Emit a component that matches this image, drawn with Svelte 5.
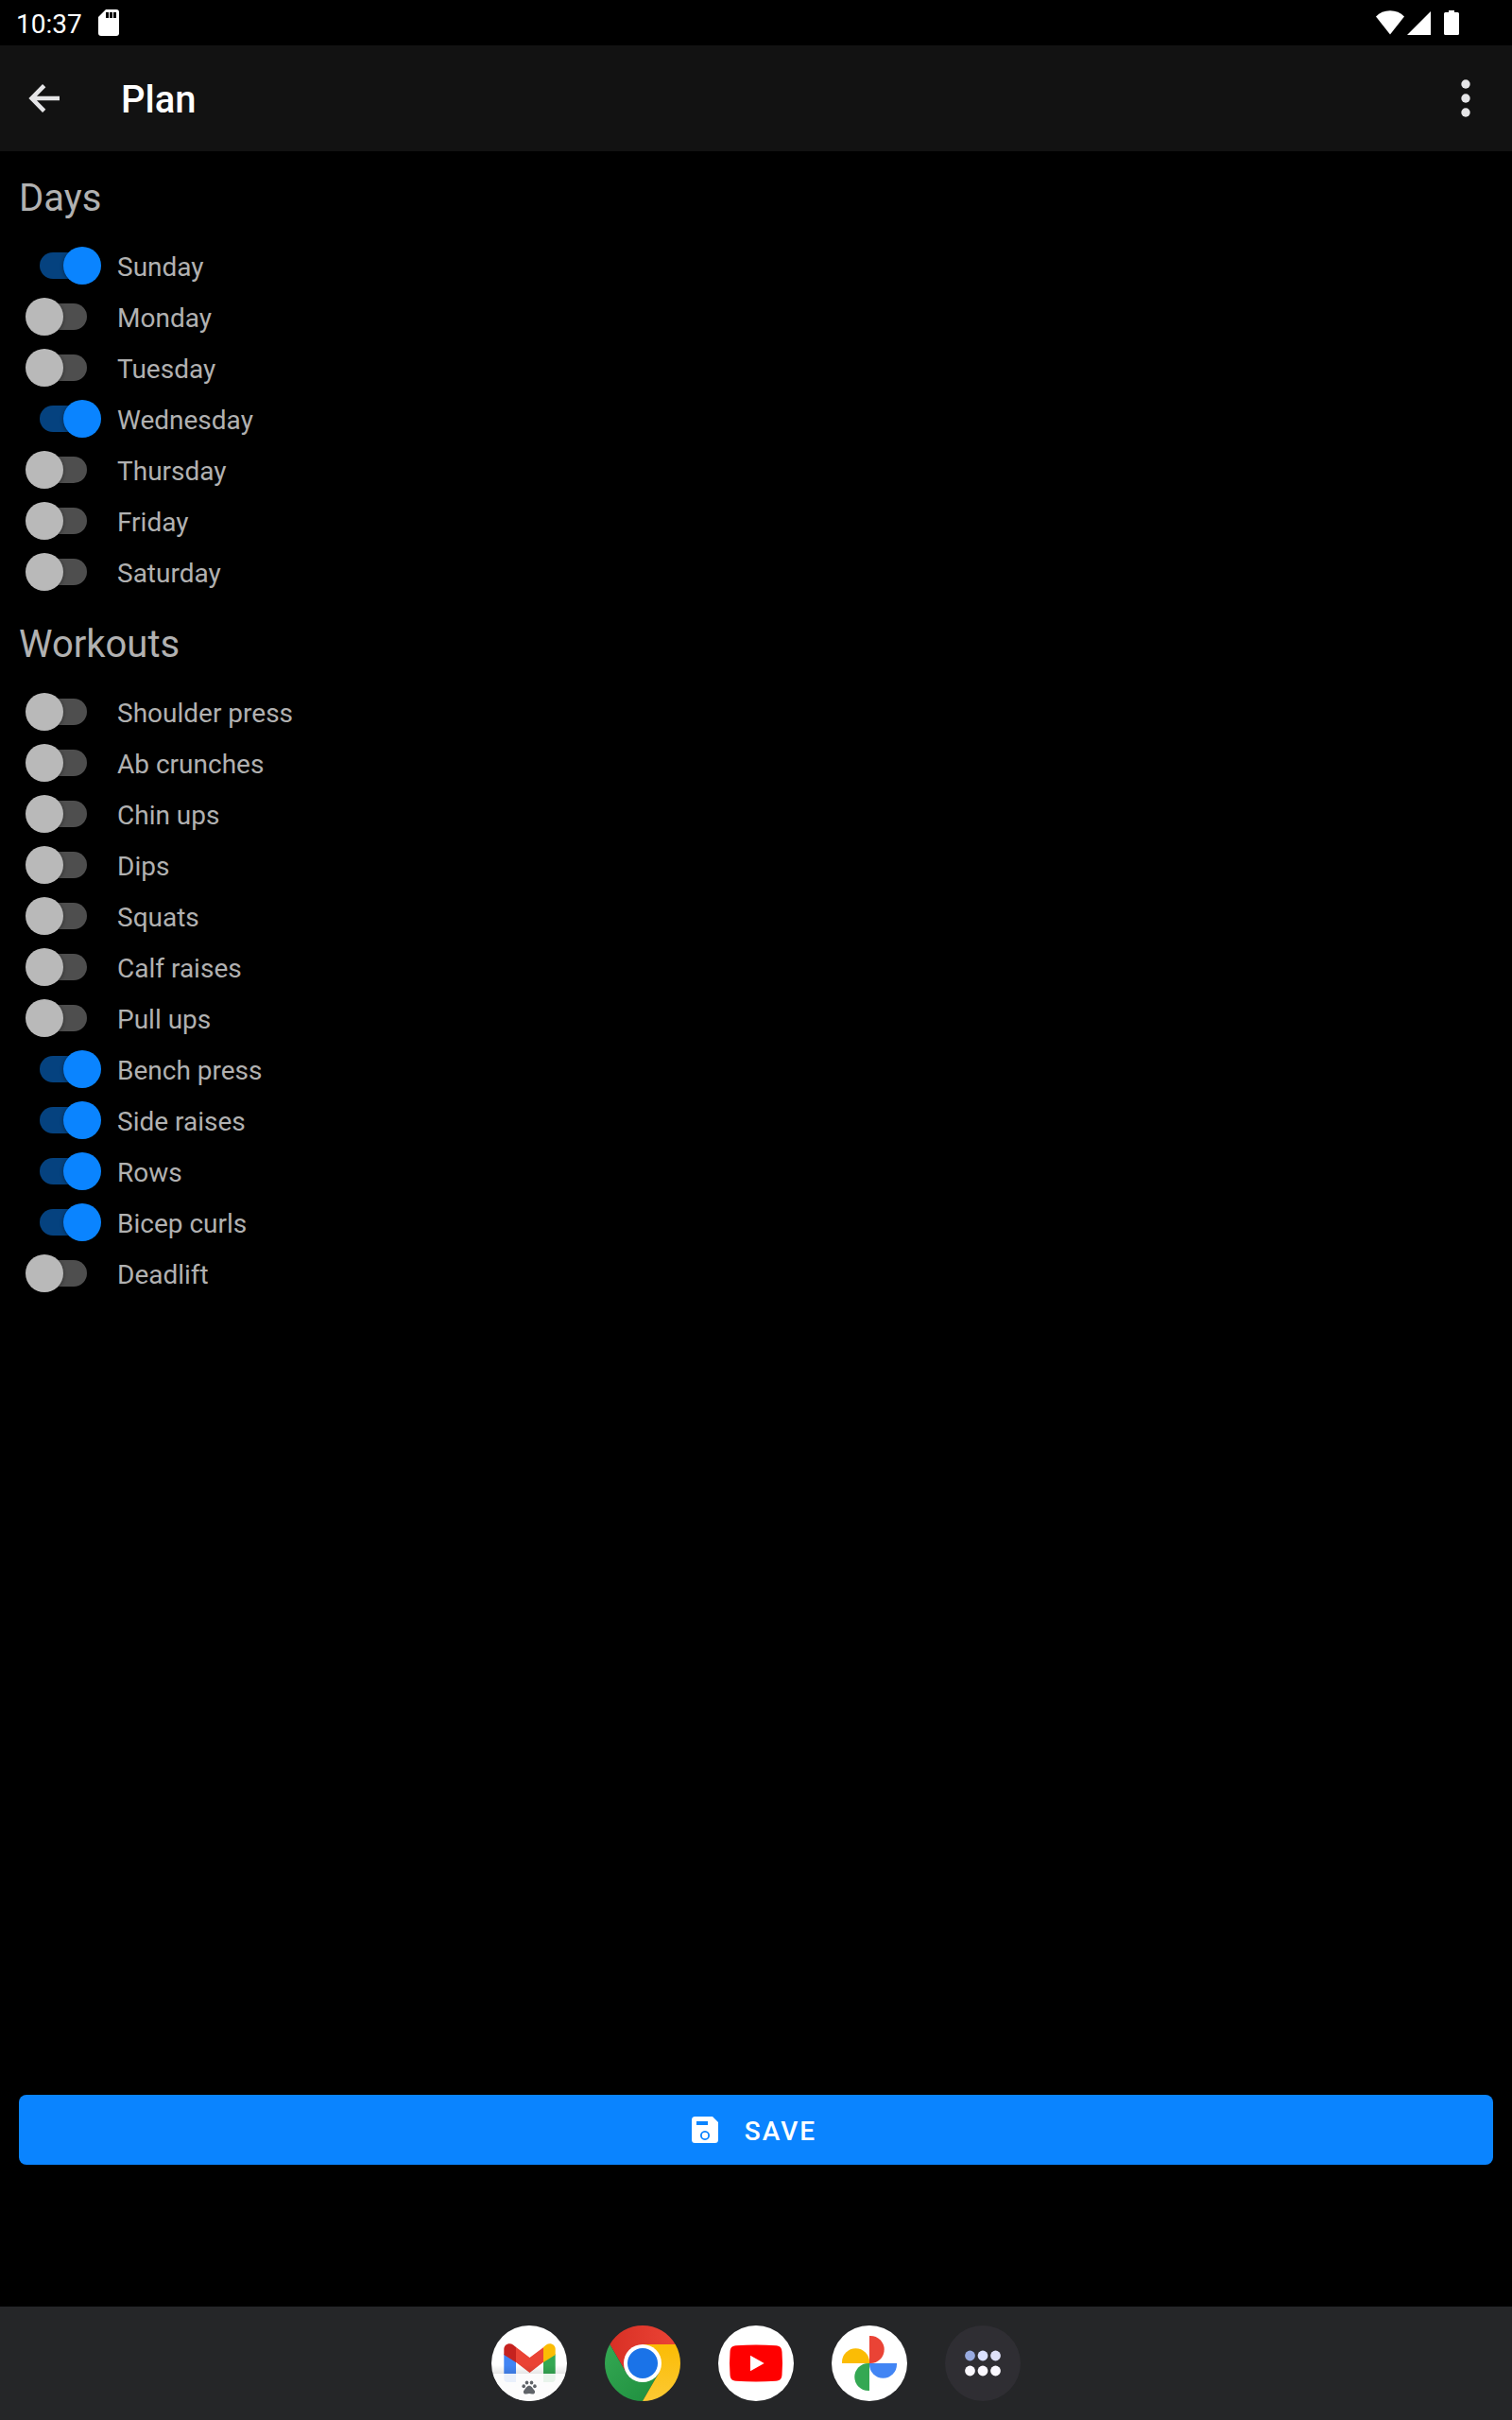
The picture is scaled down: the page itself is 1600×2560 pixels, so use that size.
<script>
  let days = $state([
    { name: 'Sunday', on: true },
    { name: 'Monday', on: false },
    { name: 'Tuesday', on: false },
    { name: 'Wednesday', on: true },
    { name: 'Thursday', on: false },
    { name: 'Friday', on: false },
    { name: 'Saturday', on: false },
  ]);
  let workouts = $state([
    { name: 'Shoulder press', on: false },
    { name: 'Ab crunches', on: false },
    { name: 'Chin ups', on: false },
    { name: 'Dips', on: false },
    { name: 'Squats', on: false },
    { name: 'Calf raises', on: false },
    { name: 'Pull ups', on: false },
    { name: 'Bench press', on: true },
    { name: 'Side raises', on: true },
    { name: 'Rows', on: true },
    { name: 'Bicep curls', on: true },
    { name: 'Deadlift', on: false },
  ]);
</script>

{#snippet group(title, items)}
  <section>
    <h2>{title}</h2>
    {#each items as item}
      <label class="row">
        <input type="checkbox" role="switch" bind:checked={item.on} />
        <span>{item.name}</span>
      </label>
    {/each}
  </section>
{/snippet}

<div class="screen">
  <div class="status">
    <span class="time">10:37</span>
    <svg class="sd" width="22" height="28" viewBox="0 0 22 28" aria-hidden="true">
      <path fill="#fff" d="M8 0H19Q22 0 22 3V25Q22 28 19 28H3Q0 28 0 25V8Z" />
      <path fill="#000" d="M8 3h3v6H8zM12 3h3v6h-3zM16 3h3v6h-3z" />
    </svg>
    <svg class="system" width="88" height="28" viewBox="0 0 88 28" fill="#fff" aria-hidden="true">
      <path d="M0 7.5Q6 1.2 15 1.2T30 7.5L15 26.5Z" />
      <path d="M58 2V27H33Z" />
      <path d="M77 1h6v2h3.5Q88 3 88 4.500V25.500Q88 27 86.500 27H73.500Q72 27 72 25.500V4.500Q72 3 73.500 3H77Z" />
    </svg>
  </div>

  <header>
    <button class="icon" aria-label="Back">
      <svg width="34" height="30" viewBox="0 0 34 30" fill="none" stroke="#e5e5e7" stroke-width="4.6">
        <path d="M16.700 1.600L3.600 15L16.700 28.400M4 15H33" />
      </svg>
    </button>
    <h1>Plan</h1>
    <button class="icon" aria-label="More options">
      <svg width="10" height="40" viewBox="0 0 10 40" fill="#e5e5e7">
        <circle cx="5" cy="5" r="4.700" /><circle cx="5" cy="20" r="4.700" /><circle cx="5" cy="35" r="4.700" />
      </svg>
    </button>
  </header>

  <main>
    {@render group('Days', days)}
    {@render group('Workouts', workouts)}
    <button class="save">
      <svg width="28" height="28" viewBox="0 0 28 28" aria-hidden="true">
        <path fill="#fff" fill-rule="evenodd" d="M3.500 0H22L28 6V24.500Q28 28 24.500 28H3.500Q0 28 0 24.500V3.500Q0 0 3.500 0ZM5 5V9H17V5ZM14 15a5 5 0 1 0 .01 0Z" />
        <circle cx="14" cy="20" r="3.200" fill="#fff" />
      </svg>
      <span>SAVE</span>
    </button>
  </main>

  <nav aria-label="Taskbar">
    <button aria-label="Gmail">
      <svg viewBox="-40 -40 80 80">
        <defs>
          <linearGradient id="fade" x1="0" y1="0" x2="0" y2="1">
            <stop offset="0" stop-color="#000" stop-opacity="0" /><stop offset="1" stop-color="#000" stop-opacity=".1" />
          </linearGradient>
          <clipPath id="disc"><circle r="40" /></clipPath>
        </defs>
        <circle r="40" fill="#fff" />
        <path fill="#4285f4" d="M-26.700-10L-14-2V20H-23Q-26.700 20-26.700 16Z" />
        <path fill="#34a853" d="M27.700-10L15-2V20H24Q27.700 20 27.700 16Z" />
        <path fill="#ea4335" d="M-14.500-17.500L.5-6L15.300-17V-1.500L.5 10L-14.500-1.500Z" />
        <path fill="#c5221f" d="M-26.700-9V-15C-26.700-20-21-22.500-17-19.500L-14-17V-1Z" />
        <path fill="#fbbc04" d="M27.700-9V-15C27.700-20 22-22.500 18-19.500L15-17V-1Z" />
        <g clip-path="url(#disc)">
          <rect x="-40" y="2" width="80" height="9" fill="url(#fade)" />
          <rect x="-40" y="11" width="80" height="30" fill="#fcfcfc" fill-opacity=".9" />
        </g>
        <g fill="#5f6368">
          <ellipse cx="-5.800" cy="24.300" rx="1.800" ry="2" /><ellipse cx="-2.500" cy="20.500" rx="1.800" ry="2" />
          <ellipse cx="2.500" cy="20.500" rx="1.800" ry="2" /><ellipse cx="5.900" cy="24.300" rx="1.800" ry="2" />
          <path d="M0 23.800C2.500 23.800 3.500 26.500 5.200 28.200C7.200 30.500 5.500 33 3 32.400Q0 31.800-3 32.400C-5.500 33-7.200 30.500-5.200 28.200C-3.500 26.500-2.500 23.800 0 23.800Z" />
        </g>
      </svg>
    </button>
    <button aria-label="Chrome">
      <svg viewBox="-40 -40 80 80">
        <defs>
          <linearGradient id="red" x1="0" x2="1"><stop stop-color="#d93025" /><stop offset="1" stop-color="#ea4335" /></linearGradient>
          <linearGradient id="green" x1="0" y1="0" x2="1" y2="1"><stop stop-color="#34a853" /><stop offset="1" stop-color="#1e8e3e" /></linearGradient>
          <linearGradient id="gold" x1="0" y1="1" x2="0" y2="0"><stop stop-color="#fcc934" /><stop offset="1" stop-color="#fbbc04" /></linearGradient>
        </defs>
        <path fill="url(#red)" d="M-34.640-20A40 40 0 0 1 34.640-20H0L-17.320 10Z" />
        <path fill="url(#green)" d="M-34.640-20A40 40 0 0 0 0 40L17.320 10H-17.320Z" />
        <path fill="url(#gold)" d="M34.640-20A40 40 0 0 1 0 40L17.320 10L0-20Z" />
        <circle r="20" fill="#fff" /><circle r="16" fill="#1a73e8" />
      </svg>
    </button>
    <button aria-label="YouTube">
      <svg viewBox="-40 -40 80 80">
        <circle r="40" fill="#fff" />
        <path fill="#f00" d="M-21-18.700Q0-20.300 21-18.700C26-18.300 27.200-16 27.500-12Q28.500 0 27.500 12C27.200 16 26 18.300 21 18.700Q0 20.300-21 18.700C-26 18.300-27.200 16-27.500 12Q-28.500 0-27.500-12C-27.200-16-26-18.300-21-18.700Z" />
        <path fill="#fff" d="M-6-8.300L8.700 0L-6 8.300Z" />
      </svg>
    </button>
    <button aria-label="Photos">
      <svg viewBox="-40 -40 80 80">
        <circle r="40" fill="#fff" />
        <path fill="#ea4335" d="M0-29H1.200A14.500 14.500 0 0 1 1.200 0H0Z" />
        <path fill="#4285f4" d="M29 0V1.200A14.500 14.500 0 0 1 0 1.200V0Z" />
        <path fill="#34a853" d="M0 29H-1.200A14.500 14.500 0 0 1-1.200 0H0Z" />
        <path fill="#fbbc04" d="M-29 0V-1.200A14.500 14.500 0 0 1 0-1.200V0Z" />
      </svg>
    </button>
    <button aria-label="All apps">
      <svg viewBox="-40 -40 80 80">
        <circle r="40" fill="#2f2e33" />
        <circle cx="-13.500" cy="-8" r="5.400" fill="#98aae0" />
        <circle cx="0" cy="-8" r="5.400" fill="#dbe1ff" />
        <circle cx="13.500" cy="-8" r="5.400" fill="#dee0f8" />
        <g fill="#faf8ff"><circle cx="-13.500" cy="8" r="5.400" /><circle cx="0" cy="8" r="5.400" /><circle cx="13.500" cy="8" r="5.400" /></g>
      </svg>
    </button>
  </nav>
</div>

<style>
  :global(body) {
    margin: 0;
    background: #000;
  }
  .screen {
    display: flex;
    flex-direction: column;
    min-height: 100vh;
    font-family: Roboto, sans-serif;
    color: #b1b1b1;
    background: #000;
  }
  button {
    padding: 0;
    border: 0;
    background: none;
    font: inherit;
    color: inherit;
    cursor: pointer;
  }
  svg {
    display: block;
  }
  .status {
    display: flex;
    align-items: center;
    height: 48px;
    padding: 0 56px 0 17px;
    box-sizing: border-box;
    font-size: 28px;
    color: #fff;
  }
  .time {
    padding-top: 2px;
  }
  .sd {
    margin-left: 17px;
  }
  .system {
    margin-left: auto;
  }
  header {
    display: flex;
    align-items: center;
    height: 112px;
    padding: 0 9px 0 7px;
    background: #121212;
    color: #fff;
  }
  .icon {
    display: grid;
    place-items: center;
    width: 80px;
    height: 80px;
  }
  h1 {
    flex: 1;
    margin: 0;
    padding: 4px 0 0 41px;
    font-size: 40px;
    font-weight: 500;
    line-height: 48px;
  }
  main {
    display: flex;
    flex: 1;
    flex-direction: column;
    padding: 0 20px 150px;
  }
  h2 {
    margin: 0;
    padding: 27px 0 21px;
    font-size: 40px;
    font-weight: 400;
    line-height: 46px;
  }
  .row {
    display: flex;
    align-items: center;
    gap: 17px;
    height: 54px;
    padding-left: 7px;
    font-size: 28px;
  }
  .row span {
    padding-top: 2px;
  }
  input {
    display: grid;
    grid-template-columns: 1fr;
    align-items: center;
    appearance: none;
    width: 80px;
    height: 40px;
    margin: 0;
  }
  input::before,
  input::after {
    content: '';
    grid-area: 1 / 1;
  }
  input::before {
    justify-self: center;
    width: 50px;
    height: 28px;
    border-radius: 14px;
    background: #4e4e4e;
  }
  input::after {
    justify-self: start;
    width: 40px;
    height: 40px;
    border-radius: 50%;
    background: #b9b9b9;
    box-shadow: 0 1px 4px rgb(0 0 0 / 0.4);
  }
  input:checked::before {
    background: #05427f;
  }
  input:checked::after {
    justify-self: end;
    background: #0a84ff;
  }
  .save {
    display: flex;
    align-items: center;
    justify-content: center;
    gap: 28px;
    height: 74px;
    margin-top: auto;
    padding-right: 4px;
    border-radius: 8px;
    background: #0a84ff;
    color: #fff;
    font-size: 28px;
    font-weight: 500;
    letter-spacing: 2px;
  }
  .save span {
    padding-top: 2px;
  }
  nav {
    display: flex;
    align-items: center;
    justify-content: center;
    gap: 40px;
    height: 120px;
    background: #252628;
  }
  nav svg {
    width: 80px;
    height: 80px;
  }
</style>
